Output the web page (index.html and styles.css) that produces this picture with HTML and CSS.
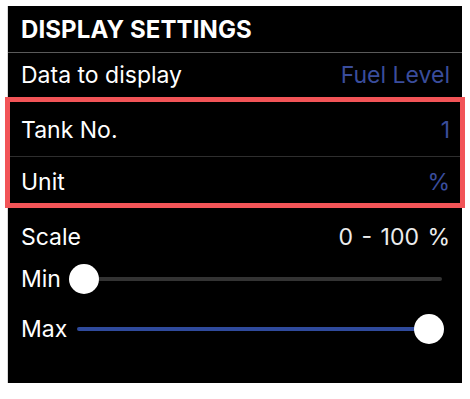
FILE: index.html
```html
<!DOCTYPE html>
<html>
<head>
<meta charset="utf-8">
<link rel="stylesheet" href="styles.css">
</head>
<body>
<div class="panel">
  <div class="header">DISPLAY SETTINGS</div>
  <div class="row row-data"><span class="label">Data to display</span><span class="value">Fuel Level</span></div>
  <div class="highlight">
    <div class="row row-tank"><span class="label">Tank No.</span><span class="value">1</span></div>
    <div class="row row-unit"><span class="label">Unit</span><span class="value">%</span></div>
  </div>
  <div class="row row-scale"><span class="label">Scale</span><span class="scale-value">0 - 100 %</span></div>
  <div class="slider-row slider-min">
    <span class="label">Min</span>
    <div class="slider">
      <div class="track"></div>
      <div class="thumb thumb-left"></div>
    </div>
  </div>
  <div class="slider-row slider-max">
    <span class="label">Max</span>
    <div class="slider">
      <div class="track track-blue"></div>
      <div class="thumb thumb-right"></div>
    </div>
  </div>
</div>
</body>
</html>
```

FILE: styles.css
```css
html, body {
  margin: 0;
  padding: 0;
  background: #ffffff;
}
body {
  font-family: Inter, "Liberation Sans", sans-serif;
  color: #ffffff;
}
.panel {
  width: 454px;
  height: 377px;
  margin: 6px 0 0 8px;
  background: #000000;
  box-sizing: border-box;
  box-shadow: 0 1px 0 #c8c8c8, -1px 0 0 #d8d8d8;
}
.header {
  border-bottom: 1px solid #5a5a5a;
  padding-left: 13px;
  display: flex;
  align-items: center;
  font-weight: 700;
  font-size: 24px;
  letter-spacing: 0.1px;
  padding-top: 1px;
  box-sizing: border-box;
  height: 47px;
}
.row {
  display: flex;
  align-items: center;
  justify-content: space-between;
  font-size: 23px;
  box-sizing: border-box;
}
.label {
  color: #ffffff;
  font-size: 23px;
}
.value {
  color: #3a4d9c;
}
.scale-value {
  color: #ececec;
  word-spacing: 2px;
}
.row-data {
  height: 44px;
  padding: 0 12px 0 13px;
}
.highlight {
  margin: 0 -3px;
  border: 5px solid #f25457;
}
.row-tank {
  height: 55px;
  padding: 2px 10px 0 11px;
  border-bottom: 1px solid #2e2e2e;
}
.row-unit {
  height: 46px;
  padding: 4px 10px 0 11px;
}
.row-scale {
  height: 56px;
  padding: 1px 12px 0 13px;
}
.slider-row {
  display: flex;
  align-items: center;
  height: 30px;
  padding: 0 18px 0 13px;
  gap: 8px;
}
.slider-max {
  margin-top: 20px;
  gap: 10px;
}
.slider {
  position: relative;
  flex: 1;
  height: 30px;
  display: flex;
  align-items: center;
}
.track {
  width: 100%;
  height: 4px;
  border-radius: 2px;
  background: #333333;
}
.slider-min .track {
  margin-right: 2px;
}
.track-blue {
  background: #2f4a9c;
}
.thumb {
  position: absolute;
  top: 0;
  width: 30px;
  height: 30px;
  border-radius: 50%;
  background: #ffffff;
}
.thumb-left {
  left: 0;
}
.thumb-right {
  right: 0;
}
```
